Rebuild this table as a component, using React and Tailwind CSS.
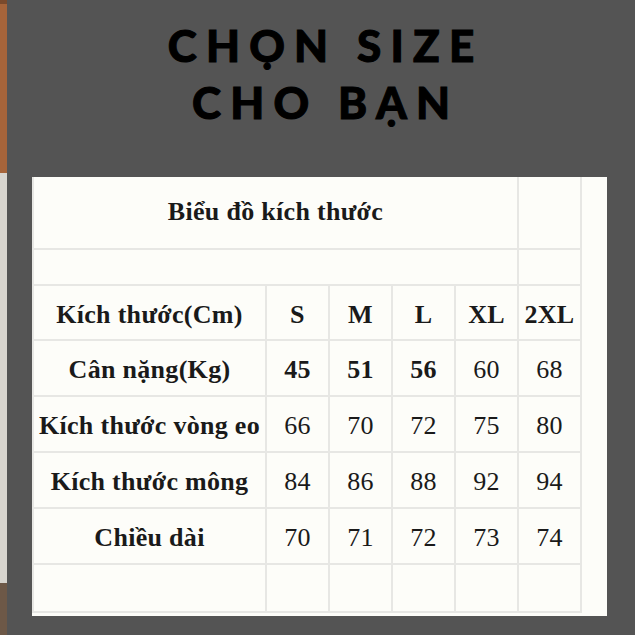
import React from "react";

const sizes = ["S", "M", "L", "XL", "2XL"];
const rows = [
  { label: "Cân nặng(Kg)", values: ["45", "51", "56", "60", "68"], bold: [true, true, true, false, false] },
  { label: "Kích thước vòng eo", values: ["66", "70", "72", "75", "80"], bold: [false, false, false, false, false] },
  { label: "Kích thước mông", values: ["84", "86", "88", "92", "94"], bold: [false, false, false, false, false] },
  { label: "Chiều dài", values: ["70", "71", "72", "73", "74"], bold: [false, false, false, false, false] },
];

const cell = "border-r-2 border-b-2 border-[#e7e7e4] flex items-center justify-center";

export default function App() {
  return (
    <div className="flex w-[635px] h-[635px] overflow-hidden">
      <div className="flex flex-col w-[7px] shrink-0">
        <div className="h-[4px] bg-[#7a4a2c]" />
        <div className="h-[169px] bg-[#a6643a]" />
        <div className="flex-1 bg-[#d8d5cf]" />
        <div className="h-[52px] bg-[#6d5847]" />
      </div>
      <div className="flex-1 bg-[#545454] flex flex-col">
        <div
          className="flex flex-col items-center pt-[17px] text-[44px] leading-[57px] font-black tracking-[0.21em] text-black [-webkit-text-stroke:1px_#000]"
          style={{ fontFamily: "Lato, 'Open Sans', sans-serif" }}
        >
          <div className="pl-[0.21em]">CHỌN SIZE</div>
          <div className="pl-[0.21em]">CHO BẠN</div>
        </div>
        <div className="mt-[46px] ml-[25px] w-[575px] h-[439px] bg-[#fdfdf9]">
          <div
            className="grid grid-cols-[233px_63px_63px_63px_63px_63px] grid-rows-[73px_36px_55px_56px_56px_56px_56px_48px] border-l-2 border-[#e7e7e4] w-fit text-[#1a1a1a] text-[26px] tracking-[0.3px]"
            style={{ fontFamily: "'Liberation Serif', 'Times New Roman', serif" }}
          >
            <div className={`${cell} col-span-5 font-bold pb-[2px]`}>Biểu đồ kích thước</div>
            <div className={cell} />
            <div className={`${cell} col-span-5`} />
            <div className={cell} />
            <div className={`${cell} font-bold pt-[3px]`}>Kích thước(Cm)</div>
            {sizes.map((s) => (
              <div key={s} className={`${cell} font-bold pt-[3px]`}>{s}</div>
            ))}
            {rows.map((r) => (
              <React.Fragment key={r.label}>
                <div className={`${cell} font-bold whitespace-nowrap pt-[2px]`}>{r.label}</div>
                {r.values.map((v, i) => (
                  <div key={i} className={`${cell} pt-[2px] ${r.bold[i] ? "font-bold" : "font-normal"}`}>{v}</div>
                ))}
              </React.Fragment>
            ))}
            <div className={cell} />
            <div className={cell} />
            <div className={cell} />
            <div className={cell} />
            <div className={cell} />
            <div className={cell} />
          </div>
        </div>
      </div>
    </div>
  );
}
